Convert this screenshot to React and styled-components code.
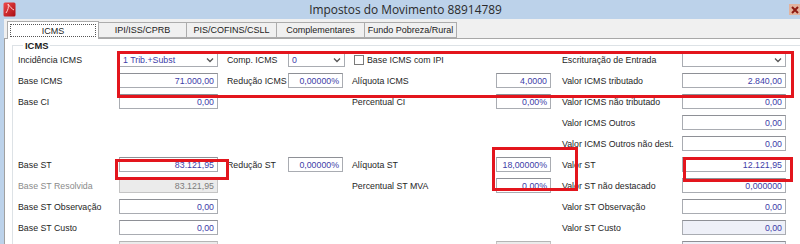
import React from "react";
import styled, { createGlobalStyle } from "styled-components";

const Global = createGlobalStyle`
  html, body { margin: 0; padding: 0; background: #ffffff; }
  body { font-family: "Liberation Sans", Arial, sans-serif; }
  * { box-sizing: border-box; }
`;

const Window = styled.div`
  position: relative;
  width: 800px;
  height: 244px;
  overflow: hidden;
  background: #bcd2ea;
  display: flex;
  flex-direction: column;
`;

const TitleBar = styled.div`
  height: 19px;
  flex: none;
  display: flex;
  align-items: center;
  padding-left: 3px;
`;

const Title = styled.div`
  flex: 1;
  text-align: center;
  font-family: "Open Sans", "Noto Sans", sans-serif;
  font-size: 11.9px;
  color: #2a2a2a;
  padding-left: 6px;
  line-height: 19px;
`;

const CloseBox = styled.div`
  width: 11px;
  height: 11px;
  display: flex;
  align-items: center;
  justify-content: center;
  background: #e2b39f;
`;

const Frame = styled.div`
  flex: 1;
  margin-left: 4px;
  background: #f0f0f0;
  padding-top: 3px;
  display: flex;
  flex-direction: column;
`;

const TabStrip = styled.div`
  height: 17px;
  flex: none;
  display: flex;
  align-items: flex-end;
  padding-left: 4px;
  border-bottom: 1px solid #a8a8a8;
`;

const Tab = styled.div`
  width: ${(p) => p.$w}px;
  height: ${(p) => (p.$active ? 18 : 16)}px;
  margin-bottom: ${(p) => (p.$active ? -1 : 0)}px;
  background: ${(p) => (p.$active ? "#ffffff" : "#f0f0f0")};
  border: 1px solid #acacac;
  border-bottom: ${(p) => (p.$active ? "none" : "1px solid #acacac")};
  margin-left: -1px;
  display: flex;
  align-items: center;
  justify-content: center;
  font-size: 9px;
  color: #222;
  padding: 2px;
  position: relative;
  z-index: ${(p) => (p.$active ? 1 : 0)};
`;

const FocusRect = styled.span`
  flex: 1;
  align-self: stretch;
  display: flex;
  align-items: center;
  justify-content: center;
  border: 1px dotted #555;
`;

const Panel = styled.div`
  flex: 1;
  background: #ffffff;
  border-left: 1px solid #a0a0a0;
  padding-top: 1px;
`;

const GroupBox = styled.fieldset`
  margin: 0 0 0 7px;
  padding: 1px 0 0 5px;
  border: 1px solid #dde2e6;
  border-right: none;
  min-width: 0;
`;

const Legend = styled.legend`
  font-size: 9.4px;
  font-weight: bold;
  color: #1c1c1c;
  padding: 0 2px;
  margin-left: 5px;
  line-height: 11px;
`;

const Grid = styled.div`
  display: grid;
  grid-template-columns: 101px 99px 70px 57px 151px 55px 131px 104px;
  grid-auto-rows: 15px;
  row-gap: 6px;
`;

const Label = styled.div`
  display: flex;
  align-items: center;
  padding-left: ${(p) => p.$pad || 0}px;
  font-size: 8.8px;
  white-space: nowrap;
  color: ${(p) => (p.$muted ? "#8a8a8a" : "#1e1e1e")};
`;

const Field = styled.div`
  width: ${(p) => (p.$w ? `${p.$w}px` : "100%")};
  height: 15px;
  border: 1px solid
    ${(p) => (p.$variant === "disabled" ? "#c4c4c4" : "#a9acb2")};
  border-top-color: ${(p) =>
    p.$variant === "disabled" ? "#b5b5b5" : "#8e9096"};
  background: ${(p) =>
    p.$variant === "disabled"
      ? "#ebebeb"
      : p.$variant === "tint"
      ? "#eef0f8"
      : "#ffffff"};
  color: ${(p) => (p.$variant === "disabled" ? "#7c7c7c" : "#4040a8")};
  font-size: 8.8px;
  display: flex;
  align-items: center;
  justify-content: ${(p) => (p.$select ? "space-between" : "flex-end")};
  padding: 0 3px 0 3px;
  white-space: nowrap;
`;

const CheckWrap = styled.div`
  grid-column: span 2;
  display: flex;
  align-items: center;
  padding-left: 9px;
  gap: 3px;
  font-size: 8.8px;
  color: #1e1e1e;
`;

const CheckBox = styled.span`
  width: 10px;
  height: 10px;
  border: 1px solid #7a7a7a;
  background: #fff;
  display: inline-block;
`;

const Mark = styled.div`
  position: absolute;
  left: ${(p) => p.$x}px;
  top: ${(p) => p.$y}px;
  width: ${(p) => p.$w}px;
  height: ${(p) => p.$h}px;
  border: 3px solid #e3151d;
  pointer-events: none;
  z-index: 5;
`;

const Chevron = () => (
  <svg width="8" height="6" viewBox="0 0 8 6">
    <path d="M1 1.5 L4 4.5 L7 1.5" fill="none" stroke="#555" strokeWidth="1.3" />
  </svg>
);

const AppIcon = () => (
  <svg width="13" height="15" viewBox="0 0 13 15">
    <defs>
      <linearGradient id="ig" x1="0" y1="0" x2="1" y2="1">
        <stop offset="0" stopColor="#f04a4a" />
        <stop offset="1" stopColor="#a80d14" />
      </linearGradient>
    </defs>
    <rect x="0.5" y="0.5" width="12" height="14" rx="1.5" fill="url(#ig)" />
    <path d="M3 11 C5 8 6 5 5 2 M5 2 C7 5 9 7 11 8" fill="none" stroke="#ffd0d0" strokeWidth="1" />
  </svg>
);

const CloseIcon = () => (
  <svg width="8" height="8" viewBox="0 0 8 8">
    <path d="M1 1 L7 7 M7 1 L1 7" stroke="#8e1a12" strokeWidth="2" />
  </svg>
);

const L = (t, pad, muted) => ({ k: "l", t, pad, muted });
const F = (t, variant, w) => ({ k: "f", t, variant, w });
const S = (t) => ({ k: "s", t });
const E = { k: "e" };

const rows = [
  [L("Incidência ICMS"), S("1 Trib.+Subst"), L("Comp. ICMS", 9), S("0"), { k: "c", t: "Base ICMS com IPI" }, L("Escrituração de Entrada", 11), S("")],
  [L("Base ICMS"), F("71.000,00"), L("Redução ICMS", 9), F("0,00000%", null, 55), L("Alíquota ICMS", 7), F("4,0000"), L("Valor ICMS tributado", 11), F("2.840,00")],
  [L("Base CI"), F("0,00"), E, E, L("Percentual CI", 7), F("0,00%"), L("Valor ICMS não tributado", 11), F("0,00")],
  [E, E, E, E, E, E, L("Valor ICMS Outros", 11), F("0,00")],
  [E, E, E, E, E, E, L("Valor ICMS Outros não dest.", 11), F("0,00")],
  [L("Base ST"), F("83.121,95"), L("Redução ST", 9), F("0,00000%", null, 55), L("Alíquota ST", 7), F("18,00000%"), L("Valor ST", 11), F("12.121,95")],
  [L("Base ST Resolvida", 0, true), F("83.121,95", "disabled"), E, E, L("Percentual ST MVA", 7), F("0,00%"), L("Valor ST não destacado", 11), F("0,000000")],
  [L("Base ST Observação"), F("0,00"), E, E, E, E, L("Valor ST Observação", 11), F("0,00")],
  [L("Base ST Custo"), F("0,00"), E, E, E, E, L("Valor ST Custo", 11), F("0,00", "tint")],
  [E, F("", "disabled"), E, E, E, F("", "disabled"), E, F("", "tint")],
];

const renderCell = (c, i) => {
  if (c.k === "l")
    return (
      <Label key={i} $pad={c.pad} $muted={c.muted}>
        {c.t}
      </Label>
    );
  if (c.k === "f")
    return (
      <Field key={i} $variant={c.variant} $w={c.w}>
        {c.t}
      </Field>
    );
  if (c.k === "s")
    return (
      <Field key={i} $select>
        <span>{c.t}</span>
        <Chevron />
      </Field>
    );
  if (c.k === "c")
    return (
      <CheckWrap key={i}>
        <CheckBox />
        {c.t}
      </CheckWrap>
    );
  return <div key={i} />;
};

const tabs = [
  { t: "ICMS", w: 92, active: true },
  { t: "IPI/ISS/CPRB", w: 89 },
  { t: "PIS/COFINS/CSLL", w: 91 },
  { t: "Complementares", w: 89 },
  { t: "Fundo Pobreza/Rural", w: 93 },
];

export default function App() {
  return (
    <>
      <Global />
      <Window>
        <TitleBar>
          <AppIcon />
          <Title>Impostos do Movimento 88914789</Title>
          <CloseBox>
            <CloseIcon />
          </CloseBox>
        </TitleBar>
        <Frame>
          <TabStrip>
            {tabs.map((t) => (
              <Tab key={t.t} $w={t.w} $active={t.active}>
                {t.active ? <FocusRect>{t.t}</FocusRect> : t.t}
              </Tab>
            ))}
          </TabStrip>
          <Panel>
            <GroupBox>
              <Legend>ICMS</Legend>
              <Grid>{rows.flatMap((r, ri) => r.map((c, ci) => renderCell(c, `${ri}-${ci}`)))}</Grid>
            </GroupBox>
          </Panel>
        </Frame>
        <Mark $x={117} $y={51} $w={677} $h={47} />
        <Mark $x={115} $y={159} $w={114} $h={21} />
        <Mark $x={492} $y={147} $w={86} $h={44} />
        <Mark $x={683} $y={157} $w={110} $h={25} />
      </Window>
    </>
  );
}
